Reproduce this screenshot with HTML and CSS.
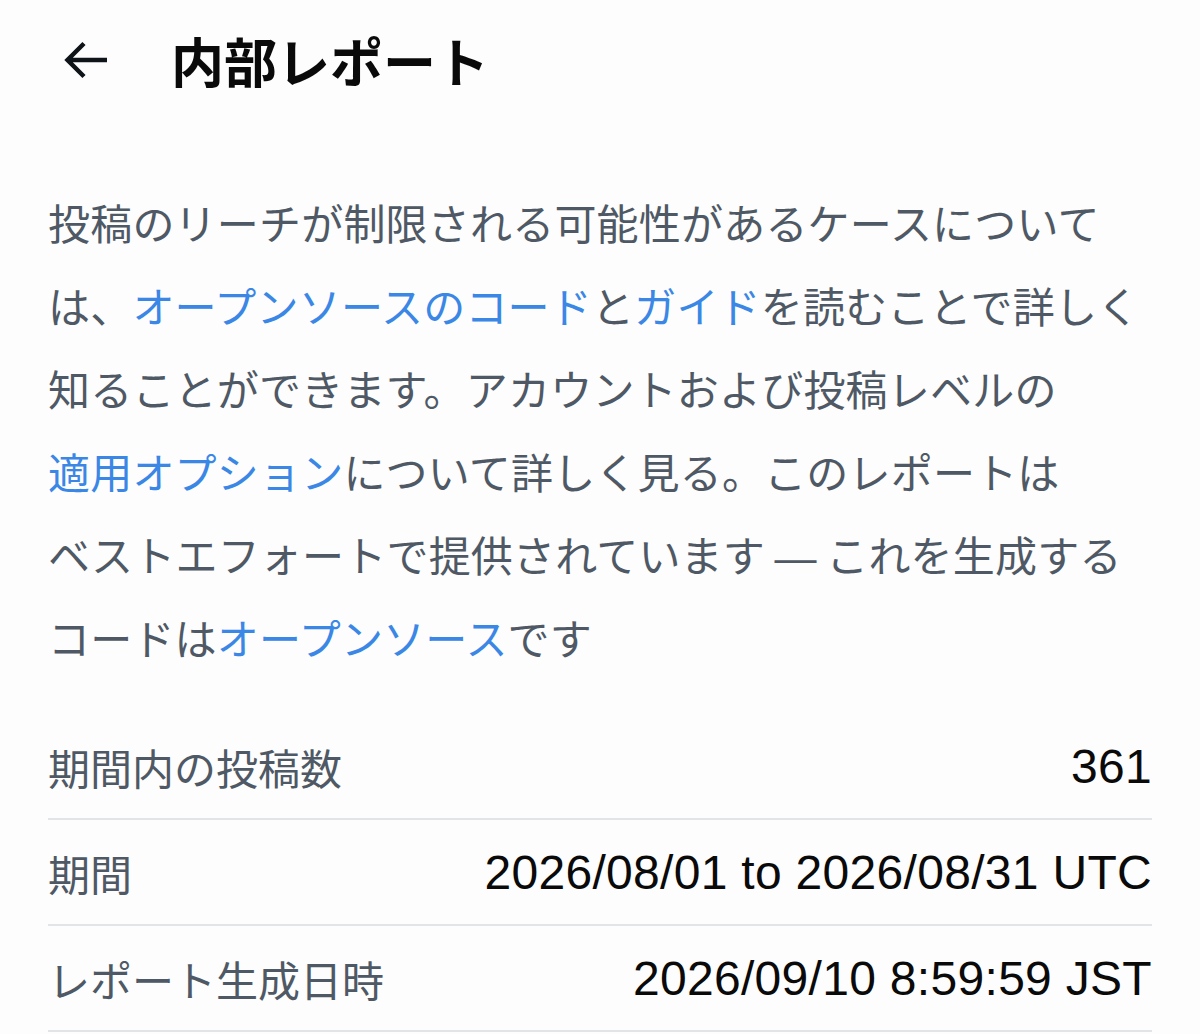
FILE: index.html
```html
<!DOCTYPE html>
<html lang="ja">
<head>
<meta charset="utf-8">
<title>内部レポート</title>
<link rel="stylesheet" href="styles.css">
</head>
<body>
<div class="page">
  <header class="topbar">
    <span class="back" aria-label="戻る">
      <svg viewBox="0 0 44 40" width="44" height="40"><path d="M43 20H4M20 3.5L3.5 20 20 36.5" fill="none" stroke="#0f1419" stroke-width="4.5" stroke-linecap="butt" stroke-linejoin="miter"/></svg>
    </span>
    <h1 class="title">内部レポート</h1>
  </header>

  <p class="intro">投稿のリーチが制限される可能性があるケースについて<br>は、<a class="link" href="#">オープンソースのコード</a>と<a class="link" href="#">ガイド</a>を読むことで詳しく<br>知ることができます。アカウントおよび投稿レベルの<br><a class="link" href="#">適用オプション</a>について詳しく見る。このレポートは<br>ベストエフォートで提供されています <span class="dash">—</span> これを生成する<br>コードは<a class="link" href="#">オープンソース</a>です</p>

  <div class="stats">
    <div class="row"><span class="label">期間内の投稿数</span><span class="value">361</span></div>
    <div class="row"><span class="label">期間</span><span class="value">2026/08/01 to 2026/08/31 UTC</span></div>
    <div class="row"><span class="label">レポート生成日時</span><span class="value">2026/09/10 8:59:59 JST</span></div>
  </div>
</div>
</body>
</html>
```

FILE: styles.css
```css
html, body {
  margin: 0;
  padding: 0;
  background: #fdfdfd;
}

body {
  font-family: "Noto Sans CJK JP", "Noto Sans", sans-serif;
  color: #0f1419;
}

.page {
  padding: 0 48px;
}

.topbar {
  height: 120px;
  display: flex;
  align-items: center;
}

.back {
  display: flex;
  width: 44px;
  height: 40px;
  margin-left: 16px;
  margin-right: 63px;
}

.title {
  margin: 0;
  font-size: 53px;
  font-weight: 700;
  line-height: 1;
  color: #0a0a0a;
}

.intro {
  margin: 60px 0 0;
  font-size: 42px;
  line-height: 83px;
  color: #4f5965;
  white-space: nowrap;
  letter-spacing: 0.2px;
}

.dash {
  font-family: "Liberation Sans", Arial, sans-serif;
  letter-spacing: 0;
  line-height: 0;
}

.link {
  color: #3a87e6;
  text-decoration: none;
}

.stats {
  margin-top: 36px;
}

.row {
  height: 104px;
  display: flex;
  align-items: center;
  justify-content: space-between;
  border-bottom: 2px solid #e2e5e8;
}

.label {
  font-size: 42px;
  color: #4f5965;
}

.value {
  font-family: "Liberation Sans", Arial, sans-serif;
  font-size: 48px;
  letter-spacing: 0.3px;
  color: #0a0a0a;
}
```
